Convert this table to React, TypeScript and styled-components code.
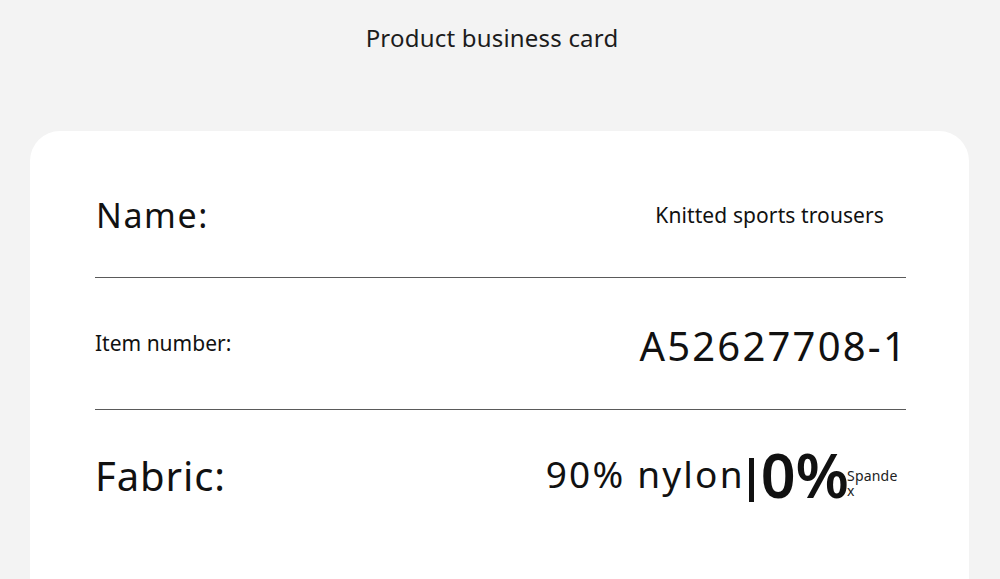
import React from "react";
import styled, { createGlobalStyle } from "styled-components";

const Global = createGlobalStyle`
  html, body { margin: 0; padding: 0; background: #f3f3f3; }
  body { font-family: "Noto Sans", "Open Sans", sans-serif; color: #111; overflow: hidden; }
`;

const Page = styled.div`
  width: 1000px;
  height: 579px;
  overflow: hidden;
  background: #f3f3f3;
`;

const Header = styled.header`
  height: 76px;
  display: flex;
  align-items: center;
  justify-content: center;
  padding-right: 16px;
  font-size: 24px;
  line-height: 1;
  color: #1c1c1c;
  letter-spacing: 0.2px;
`;

const Card = styled.section`
  margin: 55px 31px 0 30px;
  height: 520px;
  background: #fff;
  border-radius: 30px;
  padding: 22px 63px 0 65px;
  box-sizing: border-box;
`;

const Row = styled.div<{ $h: number; $line?: boolean }>`
  height: ${(p) => p.$h}px;
  display: flex;
  align-items: center;
  justify-content: space-between;
  border-bottom: ${(p) => (p.$line ? "1px solid #5a5a5a" : "none")};
`;

const Label = styled.div<{ $size: number; $ls?: number; $dx?: number }>`
  font-size: ${(p) => p.$size}px;
  letter-spacing: ${(p) => p.$ls ?? 0}px;
  line-height: 1;
  color: #111;
  margin-left: ${(p) => p.$dx ?? 0}px;
`;

const Value = styled.div<{ $size: number; $ls?: number; $pr?: number; $dy?: number }>`
  font-size: ${(p) => p.$size}px;
  letter-spacing: ${(p) => p.$ls ?? 0}px;
  line-height: 1;
  color: #111;
  margin-right: ${(p) => p.$pr ?? 0}px;
  margin-top: ${(p) => p.$dy ?? 0}px;
`;

const Fabric = styled.div`
  display: flex;
  align-items: flex-end;
  margin-right: 7px;
  color: #111;
`;

const Nylon = styled.span`
  font-size: 37px;
  line-height: 1;
  letter-spacing: 2.2px;
  margin-bottom: 15px;
`;

const Bar = styled.span`
  display: inline-block;
  width: 5px;
  height: 44px;
  background: #111;
  margin: 0 7px 5px 4px;
`;

const Big = styled.span`
  font-size: 61px;
  font-weight: 600;
  line-height: 1;
  margin-bottom: 2px;
`;

const Small = styled.span`
  align-self: flex-start;
  width: 52px;
  margin-left: -2px;
  margin-top: 24px;
  font-size: 14px;
  line-height: 15px;
  letter-spacing: 0.2px;
  word-break: break-all;
  color: #222;
`;

export default function App() {
  return (
    <Page>
      <Global />
      <Header>Product business card</Header>
      <Card>
        <Row $h={124} $line>
          <Label $size={34} $ls={1.6} $dx={1}>Name:</Label>
          <Value $size={21} $pr={22} $ls={0.1}>Knitted sports trousers</Value>
        </Row>
        <Row $h={131} $line>
          <Label $size={21} $ls={0}>Item number:</Label>
          <Value $size={40} $ls={2.2} $pr={-2} $dy={4}>A52627708-1</Value>
        </Row>
        <Row $h={131}>
          <Label $size={40} $ls={0.9}>Fabric:</Label>
          <Fabric>
            <Nylon>90% nylon</Nylon>
            <Bar />
            <Big>0%</Big>
            <Small>Spandex</Small>
          </Fabric>
        </Row>
      </Card>
    </Page>
  );
}
